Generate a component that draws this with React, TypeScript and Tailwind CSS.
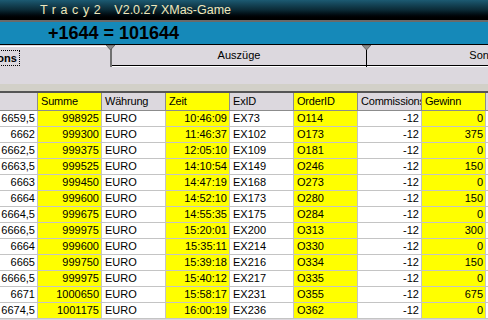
import React from 'react';

type Row = [string, string, string, string, string, string, string, string];

const rows: Row[] = [
  ['6659,5', '998925', 'EURO', '10:46:09', 'EX73', 'O114', '-12', '0'],
  ['6662', '999300', 'EURO', '11:46:37', 'EX102', 'O173', '-12', '375'],
  ['6662,5', '999375', 'EURO', '12:05:10', 'EX109', 'O181', '-12', '0'],
  ['6663,5', '999525', 'EURO', '14:10:54', 'EX149', 'O246', '-12', '150'],
  ['6663', '999450', 'EURO', '14:47:19', 'EX168', 'O273', '-12', '0'],
  ['6664', '999600', 'EURO', '14:52:10', 'EX173', 'O280', '-12', '150'],
  ['6664,5', '999675', 'EURO', '14:55:35', 'EX175', 'O284', '-12', '0'],
  ['6666,5', '999975', 'EURO', '15:20:01', 'EX200', 'O313', '-12', '300'],
  ['6664', '999600', 'EURO', '15:35:11', 'EX214', 'O330', '-12', '0'],
  ['6665', '999750', 'EURO', '15:39:18', 'EX216', 'O334', '-12', '150'],
  ['6666,5', '999975', 'EURO', '15:40:12', 'EX217', 'O335', '-12', '0'],
  ['6671', '1000650', 'EURO', '15:58:17', 'EX231', 'O355', '-12', '675'],
  ['6674,5', '1001175', 'EURO', '16:00:19', 'EX236', 'O362', '-12', '0'],
];

// column setup: width, yellow?, align
const cols = [
  { title: '', w: 'w-[38px]', yellow: false, right: true },
  { title: 'Summe', w: 'w-[64px]', yellow: true, right: true },
  { title: 'Währung', w: 'w-[64px]', yellow: false, right: false },
  { title: 'Zeit', w: 'w-[64px]', yellow: true, right: true },
  { title: 'ExID', w: 'w-[64px]', yellow: false, right: false },
  { title: 'OrderID', w: 'w-[64px]', yellow: true, right: false },
  { title: 'Commissions', w: 'w-[64px]', yellow: false, right: true },
  { title: 'Gewinn', w: 'w-[64px]', yellow: true, right: true },
];

function Marker() {
  return (
    <svg width="9" height="5" viewBox="0 0 9 5">
      <polygon points="0,0 9,0 4.5,5" fill="#8a8a8a" stroke="#555" strokeWidth="0.8" />
    </svg>
  );
}

export default function App() {
  return (
    <div
      className="w-[488px] h-[320px] overflow-hidden bg-[#dcd8de] text-black"
      style={{ fontFamily: '"Liberation Sans", Arial, sans-serif' }}
    >
      {/* Title bar */}
      <div className="h-[20px] bg-gradient-to-b from-[#1c5a72] via-[#0b2a36] to-[#000000] flex items-center pl-[40px] text-[12.5px] text-[#f0e8bc] leading-none">
        <span className="tracking-[4.6px]">Tracy2</span>
        <span className="ml-[9px]">V2.0.27 XMas-Game</span>
      </div>
      <div className="h-[2px] bg-[#6a6a6a]" />

      {/* Score bar */}
      <div className="h-[22px] bg-[#1589b9] flex items-center pl-[48px] text-[18px] font-bold leading-none">
        +1644 = 101644
      </div>
      <div className="h-[1px] bg-black" />

      {/* Tabs */}
      <div className="relative h-[22px] flex overflow-hidden text-[11px]">
        <div className="w-[254px] ml-[-144px] shrink-0 border-t border-t-white mt-[1px] flex items-start justify-center pt-[3px]">
          <span className="font-bold border border-dotted border-black px-[2px] py-[1px] leading-[12px]">
            Transactions
          </span>
        </div>
        <div className="w-[256px] shrink-0 border-l-2 border-l-[#707070] flex flex-col">
          <div className="flex-1 flex items-center justify-center pt-[1px]">Auszüge</div>
          <div className="h-[1px] bg-black" />
          <div className="h-[1px] bg-white" />
        </div>
        <div className="w-[254px] shrink-0 border-l border-l-black flex flex-col">
          <div className="flex-1 flex items-center justify-center pt-[1px]">Sonstiges</div>
          <div className="h-[1px] bg-black" />
          <div className="h-[1px] bg-white" />
        </div>
        <div className="absolute left-[106px] top-0">
          <Marker />
        </div>
        <div className="absolute left-[362px] top-0">
          <Marker />
        </div>
      </div>

      {/* Panel */}
      <div className="h-[17px]" />
      <div className="h-[7px] bg-[#d2d0c8]" />
      <div className="h-[2px] bg-[#555555]" />

      {/* Table */}
      <div className="text-[11px] leading-none">
        <div className="flex h-[18px]">
          {cols.map((c, i) => (
            <div
              key={i}
              className={`${c.w} shrink-0 h-full flex items-center pl-[3px] border-r border-b border-[#8c8c8c] whitespace-nowrap overflow-hidden tracking-[-0.2px] ${
                c.yellow ? 'bg-[#ffff00]' : 'bg-[#dcd8de]'
              }`}
            >
              {c.title}
            </div>
          ))}
          <div className="flex-1 h-full bg-[#dcd8de] border-b border-[#8c8c8c]" />
        </div>
        {rows.map((r, ri) => (
          <div key={ri} className="flex h-[16px]">
            {r.map((v, ci) => (
              <div
                key={ci}
                className={`${cols[ci].w} shrink-0 h-full flex items-center border-r border-b border-[#c4c4c4] whitespace-nowrap overflow-hidden ${
                  cols[ci].right ? 'justify-end pr-[2px]' : 'pl-[3px]'
                } ${cols[ci].yellow ? 'bg-[#ffff00]' : 'bg-white'}`}
              >
                {v}
              </div>
            ))}
            <div className="flex-1 h-full bg-white border-b border-[#c4c4c4]" />
          </div>
        ))}
      </div>
    </div>
  );
}
